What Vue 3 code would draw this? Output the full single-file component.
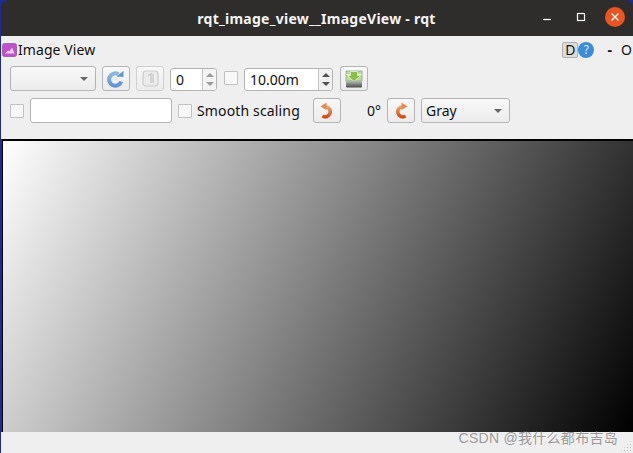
<script setup>
const rowOne = { value: '0', time: '10.00m' }
</script>

<template>
  <div class="window">
    <header class="titlebar">
      <span class="title">rqt_image_view__ImageView - rqt</span>
      <div class="controls">
        <svg class="min" width="12" height="12" viewBox="0 0 12 12"><path d="M2 8.500h8" stroke="#fff" stroke-width="1.300" fill="none"/></svg>
        <svg class="max" width="12" height="12" viewBox="0 0 12 12"><rect x="2.500" y="2.500" width="7" height="7" fill="none" stroke="#fff" stroke-width="1.200"/></svg>
        <span class="close">
          <svg width="10" height="10" viewBox="0 0 10 10"><path d="M1.500 1.500l7 7M8.500 1.500l-7 7" stroke="#fff" stroke-width="1.300"/></svg>
        </span>
      </div>
    </header>

    <section class="dock-title">
      <div class="dock-left">
        <svg class="app-icon" width="15" height="14" viewBox="0 0 15 14">
          <rect x="0.500" y="0.500" width="14" height="13" rx="2" fill="#c44fcc" stroke="#9a6aa6"/>
          <path d="M3 10.500l3-3 1.500 1 2.500-4 2.500 6z" fill="#f3d0f3"/>
        </svg>
        <span>Image View</span>
      </div>
      <div class="dock-right">
        <span class="d-btn">D</span>
        <span class="help">?</span>
        <span class="dash">-</span>
        <span class="o">O</span>
      </div>
    </section>

    <section class="row row-one">
      <div class="combo combo-topic"><i class="caret"></i></div>
      <button class="tool">
        <svg width="18" height="18" viewBox="0 0 18 18">
          <defs>
            <linearGradient id="blueFill" x1="0" y1="0" x2="0" y2="1">
              <stop offset="0" stop-color="#8db8e4"/>
              <stop offset="1" stop-color="#5f95d2"/>
            </linearGradient>
          </defs>
          <path d="M11.500 4.200A6.200 6.200 0 1 0 14.200 11.500" fill="none" stroke="url(#blueFill)" stroke-width="4"/>
          <path d="M9.500 6.500L16.500 7V.800z" fill="#5f95d2"/>
          <circle cx="9.500" cy="9.500" r="1.300" fill="#dfeaf6"/>
        </svg>
      </button>
      <button class="tool tool-disabled">
        <svg width="17" height="17" viewBox="0 0 17 17">
          <rect x="1" y="1" width="15" height="15" rx="3" fill="#ececec" stroke="#cbcbcb" stroke-width="1.200"/>
          <path d="M6 5.500L9 3.800V13M11 4v9" fill="none" stroke="#c6c6c6" stroke-width="1.200"/>
        </svg>
      </button>
      <div class="spin spin-small">
        <span class="spin-value">{{ rowOne.value }}</span>
        <span class="arrows"><i class="up dim"></i><i class="down dim"></i></span>
      </div>
      <span class="check check-time"></span>
      <div class="spin spin-time">
        <span class="spin-value">{{ rowOne.time }}</span>
        <span class="arrows"><i class="up"></i><i class="down"></i></span>
      </div>
      <button class="tool tool-save">
        <svg width="18" height="18" viewBox="0 0 18 18">
          <defs>
            <linearGradient id="tray" x1="0" y1="0" x2="0" y2="1">
              <stop offset="0" stop-color="#b8bab6"/>
              <stop offset="1" stop-color="#4a4c49"/>
            </linearGradient>
          </defs>
          <rect x="1" y="1" width="16" height="10" fill="#bcdca0" stroke="#8da57e" stroke-width=".8"/>
          <path d="M1 4.500h16" stroke="#f4f8ee" stroke-width=".8"/>
          <path d="M5.500 1.500h7v4h3L9 11.500 2.500 5.500h3z" fill="#86bd44" stroke="#eef6e2" stroke-width=".7"/>
          <rect x="1" y="11" width="16" height="6.500" rx="1" fill="url(#tray)"/>
        </svg>
      </button>
    </section>

    <section class="row row-two">
      <span class="check"></span>
      <div class="text-input"></div>
      <span class="check"></span>
      <span class="label">Smooth scaling</span>
      <button class="tool rotate-left">
        <svg width="16" height="17" viewBox="0 0 16 17">
          <defs>
            <linearGradient id="orangeL" x1="0" y1="0" x2="0" y2="1">
              <stop offset="0" stop-color="#eda26e"/>
              <stop offset="1" stop-color="#dc4a18"/>
            </linearGradient>
          </defs>
          <path d="M6 4.800A5 5 0 1 1 3.500 14" fill="none" stroke="url(#orangeL)" stroke-width="3.600"/>
          <path d="M7.500 .500V8L1.500 4.500z" fill="#e88a55"/>
        </svg>
      </button>
      <span class="degrees">0°</span>
      <button class="tool rotate-right">
        <svg width="16" height="17" viewBox="0 0 16 17">
          <defs>
            <linearGradient id="orangeR" x1="0" y1="0" x2="0" y2="1">
              <stop offset="0" stop-color="#eda26e"/>
              <stop offset="1" stop-color="#dc4a18"/>
            </linearGradient>
          </defs>
          <path d="M10 4.800A5 5 0 1 0 12.500 14" fill="none" stroke="url(#orangeR)" stroke-width="3.600"/>
          <path d="M8.500 .500V8l6-3.500z" fill="#e88a55"/>
        </svg>
      </button>
      <div class="combo combo-color"><span>Gray</span><i class="caret"></i></div>
    </section>

    <main class="image-frame"><div class="image"></div></main>

    <footer class="statusbar">
      <span class="watermark">CSDN @我什么都布吉岛</span>
      <span class="grip"></span>
    </footer>
  </div>
</template>

<style>
html, body { margin: 0; background: #2c2a8a; }
</style>

<style scoped>
.window {
  width: 633px;
  height: 453px;
  box-sizing: border-box;
  padding-left: 1px;
  display: flex;
  flex-direction: column;
  background: #1f2a9a;
  font-family: "Noto Sans", "Open Sans", sans-serif;
  font-size: 14px;
  color: #111;
  overflow: hidden;
}
.titlebar {
  height: 36px;
  flex: none;
  position: relative;
  display: flex;
  align-items: center;
  justify-content: center;
  background: #2f2c2c;
  border-radius: 8px 8px 0 0;
  color: #f4f4f4;
  font-weight: 700;
  font-size: 14px;
  letter-spacing: 0.26px;
}
.title { margin-left: -1px; }
.controls {
  position: absolute;
  right: 8px;
  top: 7px;
  display: flex;
  align-items: center;
}
.max { margin-left: 22px; }
.close {
  width: 20px;
  height: 20px;
  margin-left: 18px;
  border-radius: 50%;
  background: #e95420;
  display: flex;
  align-items: center;
  justify-content: center;
}
.dock-title {
  height: 28px;
  flex: none;
  box-sizing: border-box;
  display: flex;
  align-items: center;
  justify-content: space-between;
  background: #efefef;
  font-size: 14px;
  letter-spacing: 0.08px;
  padding-right: 1px;
  padding-bottom: 1px;
}
.dock-left { display: flex; align-items: center; gap: 1px; }
.app-icon { margin-left: 1px; }
.dock-right { display: flex; align-items: center; }
.d-btn {
  width: 16px;
  height: 16px;
  box-sizing: border-box;
  border: 1px solid #b0b0b0;
  background: #dcdcdc;
  border-radius: 2px;
  display: flex;
  align-items: center;
  justify-content: center;
  font-size: 14px;
}
.help {
  width: 16px;
  height: 16px;
  border-radius: 50%;
  background: #3a8dd8;
  color: #d8ecff;
  font-size: 12px;
  display: flex;
  align-items: center;
  justify-content: center;
}
.dash { margin-left: 13px; font-weight: 700; }
.o { margin-left: 9px; }
.row {
  flex: none;
  box-sizing: border-box;
  display: flex;
  background: #efefef;
  padding-left: 9px;
}
.row-one { height: 27px; align-items: flex-end; }
.row-two { height: 48px; padding-top: 7px; padding-bottom: 16px; align-items: center; }
.combo {
  height: 25px;
  box-sizing: border-box;
  border: 1px solid #b4b4b4;
  border-radius: 3px;
  background: linear-gradient(#f8f8f8, #ececec);
  display: flex;
  align-items: center;
  justify-content: space-between;
  padding: 0 7px 0 4px;
}
.combo-topic { width: 86px; justify-content: flex-end; }
.combo-color { width: 89px; margin-left: 6px; }
.caret {
  width: 0;
  height: 0;
  border-left: 4px solid transparent;
  border-right: 4px solid transparent;
  border-top: 4px solid #666;
}
.tool {
  width: 28px;
  height: 25px;
  box-sizing: border-box;
  padding: 0;
  border: 1px solid #b4b4b4;
  border-radius: 3px;
  background: linear-gradient(#f8f8f8, #ececec);
  display: flex;
  align-items: center;
  justify-content: center;
}
.row-one .tool { margin-left: 6px; }
.row-one .tool-save { margin-left: 7px; }
.tool-disabled { border-color: #cfcfcf; }
.spin {
  height: 23px;
  box-sizing: border-box;
  border: 1px solid #b4b4b4;
  border-radius: 3px;
  background: #fff;
  display: flex;
  align-items: stretch;
  justify-content: space-between;
  margin-left: 6px;
}
.spin-small { width: 47px; }
.spin-time { width: 89px; }
.spin-value { padding-left: 5px; line-height: 22px; }
.arrows {
  width: 13px;
  border-left: 1px solid #c4c4c4;
  background: #f3f3f3;
  border-radius: 0 2px 2px 0;
  display: flex;
  flex-direction: column;
  align-items: center;
  justify-content: center;
  gap: 5px;
}
.up, .down {
  width: 0;
  height: 0;
  border-left: 4px solid transparent;
  border-right: 4px solid transparent;
}
.up { border-bottom: 4px solid #505050; }
.down { border-top: 4px solid #505050; }
.up.dim { border-bottom-color: #9a9a9a; }
.down.dim { border-top-color: #9a9a9a; }
.check {
  width: 14px;
  height: 14px;
  flex: none;
  box-sizing: border-box;
  border: 1px solid #c2c2c2;
  background: #f8f8f8;
  border-radius: 1px;
}
.check-time { margin-left: 7px; margin-bottom: 6px; }
.text-input {
  width: 142px;
  height: 25px;
  margin-left: 6px;
  box-sizing: border-box;
  border: 1px solid #b4b4b4;
  border-radius: 3px;
  background: #fff;
}
.row-two .text-input + .check { margin-left: 6px; }
.label { margin-left: 5px; letter-spacing: 0.15px; }
.rotate-left { margin-left: 13px; }
.degrees { margin-left: 26px; width: 16px; }
.rotate-right { margin-left: 4px; }
.image-frame {
  height: 293px;
  flex: none;
  box-sizing: border-box;
  margin-left: 1px;
  border-top: 2px solid #000;
  border-left: 1px solid #000;
  background: #000;
}
.image {
  height: 100%;
  background: linear-gradient(118deg, #fff 0%, #000 100%);
}
.statusbar {
  flex: 1;
  position: relative;
  background: #efefef;
}
.watermark {
  position: absolute;
  right: 15px;
  top: -5px;
  font-family: "Liberation Sans", "Noto Sans CJK SC", sans-serif;
  font-size: 14px;
  letter-spacing: 0.28px;
  color: rgba(125, 125, 125, 0.75);
}
.grip {
  position: absolute;
  right: 1px;
  bottom: 1px;
  width: 12px;
  height: 12px;
  background-image: radial-gradient(#b5b5b5 40%, transparent 45%);
  background-size: 3px 3px;
  clip-path: polygon(100% 0, 100% 100%, 0 100%);
}
</style>
